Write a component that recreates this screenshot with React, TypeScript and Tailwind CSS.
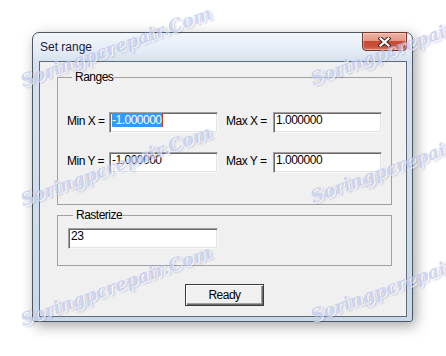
import React from "react";

const ui = "font-['Liberation_Sans',Arial,sans-serif] text-[12px] tracking-[-0.5px] text-black";

const SunkenBox: React.FC<{ className?: string; children?: React.ReactNode }> = ({ className = "", children }) => (
  <div
    className={`h-[21px] bg-white border border-t-[#a0a0a0] border-l-[#a0a0a0] border-r-[#f7f7f7] border-b-[#f7f7f7] shadow-[inset_1px_1px_0_#696969,inset_-1px_-1px_0_#e3e3e3] pt-[1px] pl-[2px] ${className}`}
  >
    <span className={`${ui} leading-[12px] block whitespace-nowrap`}>{children}</span>
  </div>
);

const Row: React.FC<{ a: string; b: string; va: React.ReactNode; vb: React.ReactNode }> = ({ a, b, va, vb }) => (
  <div className="flex items-start h-[21px]">
    <span className={`${ui} w-[42px] pt-[1px] leading-[16px] whitespace-nowrap`}>{a}</span>
    <SunkenBox className="w-[109px]">{va}</SunkenBox>
    <span className={`${ui} ml-[8px] w-[47px] pt-[1px] leading-[16px] whitespace-nowrap`}>{b}</span>
    <SunkenBox className="w-[109px]">{vb}</SunkenBox>
  </div>
);

const Mark: React.FC<{ className: string }> = ({ className }) => (
  <span
    className={`absolute origin-bottom-left rotate-[-20deg] whitespace-nowrap font-['DejaVu_Serif',serif] italic font-bold text-[18px] leading-[22px] text-[#bcc7ef] opacity-70 [text-shadow:1px_1px_0_#ffffff,2px_2px_2px_rgba(90,100,140,0.45)] pointer-events-none ${className}`}
  >
    Soringpcrepair.Com
  </span>
);

export default function App() {
  return (
    <div className="w-[446px] h-[356px] bg-white relative overflow-hidden pl-[32px] pt-[32px]">
      <div className="w-[381px] h-[290px] flex flex-col rounded-t-[7px] rounded-b-[3px] border border-[#4d5661] bg-[linear-gradient(180deg,#f2f6fb_0px,#e4ecf5_18px,#d6e2ef_28px,#c9d9ea_100%)] shadow-[3px_4px_14px_rgba(0,0,0,0.35)]">
        {/* title bar */}
        <div className="h-[28px] flex items-start justify-between pl-[7px] pr-[5px]">
          <span className="self-center mt-[-1px] font-['Liberation_Sans',Arial,sans-serif] text-[12px] leading-[14px] text-[#181c3c]">
            Set range
          </span>
          <button className="-mt-[1px] w-[45px] h-[19px] flex items-center justify-center rounded-b-[4px] border border-[#73362c] bg-[linear-gradient(180deg,#eeb3a3_0%,#e39886_45%,#c84a30_50%,#c9513a_80%,#e07c62_100%)] shadow-[inset_0_0_0_1px_rgba(255,255,255,0.35)]">
            <svg width="13" height="10" viewBox="0 0 13 10">
              <path d="M2.5 1.5 L10.5 8.5 M10.5 1.5 L2.5 8.5" stroke="#3a2624" strokeWidth="4.2" strokeLinecap="square" />
              <path d="M2.5 1.5 L10.5 8.5 M10.5 1.5 L2.5 8.5" stroke="#ffffff" strokeWidth="2.2" strokeLinecap="square" />
            </svg>
          </button>
        </div>

        {/* client area */}
        <div className="ml-[6px] mr-[5px] h-[256px] border border-[#5f6b78] bg-[#f0f0f0] flex flex-col pl-[17px] pr-[14px]">
          <fieldset className="mt-[8px] h-[135px] border border-[#a0a0a0] min-w-0 m-0 p-0 pt-[28px] pl-[9px]">
            <legend className={`${ui} ml-[5px] pl-[3px] pr-[1px] leading-[14px]`}>Ranges</legend>
            <div className="flex flex-col gap-[19px]">
              <Row
                a="Min X ="
                b="Max X ="
                va={
                  <span className="bg-[#3399ff] text-white border-r border-r-[#c0401c]">-1.000000</span>
                }
                vb="1.000000"
              />
              <Row a="Min Y =" b="Max Y =" va="-1.000000" vb="1.000000" />
            </div>
          </fieldset>

          <fieldset className="mt-[3px] h-[58px] border border-[#a0a0a0] min-w-0 m-0 p-0 pt-[6px] pl-[10px]">
            <legend className={`${ui} ml-[5px] pl-[3px] pr-[1px] leading-[14px]`}>Rasterize</legend>
            <SunkenBox className="w-[150px]">23</SunkenBox>
          </fieldset>

          <button
            className={`${ui} self-center mt-[18px] w-[79px] h-[22px] border border-[#3c3c3c] bg-[#f0f0f0] shadow-[inset_1px_1px_0_#ffffff,inset_-1px_-1px_0_#696969,inset_-2px_-2px_0_#a0a0a0] leading-[16px] flex items-center justify-center`}
          >
            Ready
          </button>
        </div>
      </div>

      {/* watermark */}
      <Mark className="left-[25px] top-[70px]" />
      <Mark className="left-[315px] top-[68px]" />
      <Mark className="left-[25px] top-[189px]" />
      <Mark className="left-[315px] top-[186px]" />
      <Mark className="left-[25px] top-[309px]" />
      <Mark className="left-[315px] top-[305px]" />
    </div>
  );
}
